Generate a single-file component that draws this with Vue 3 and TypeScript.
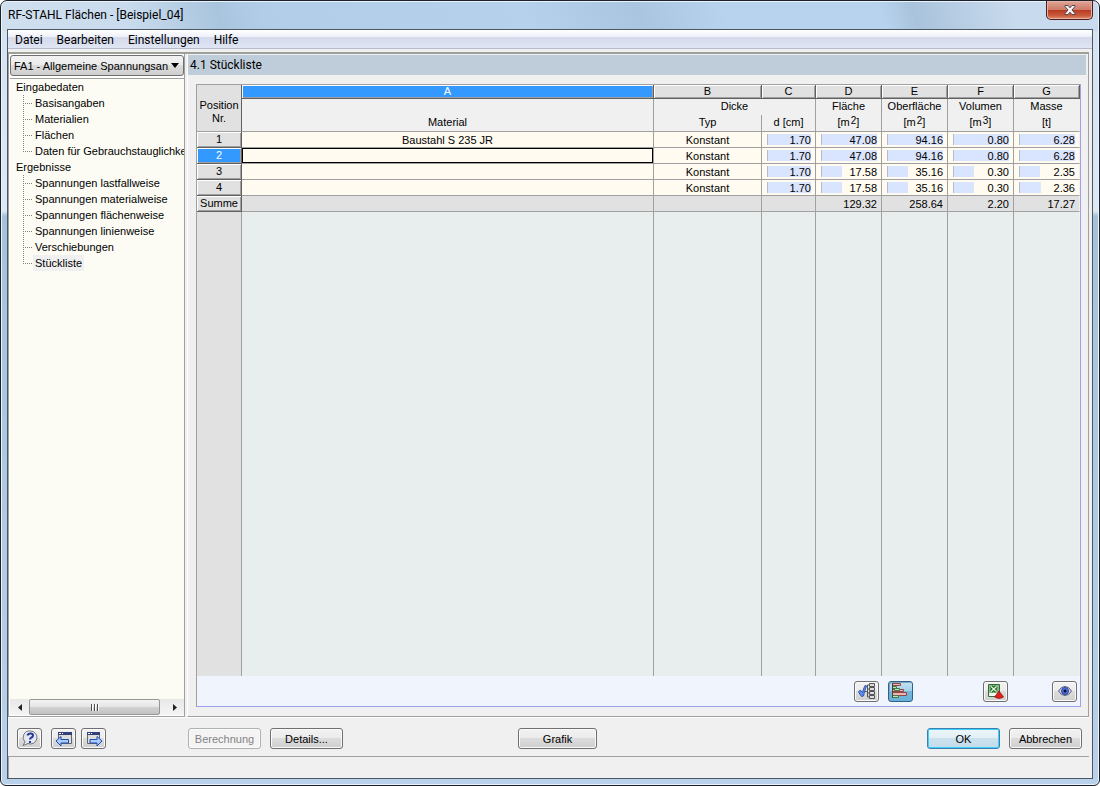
<script setup lang="ts">
import { ref } from 'vue'

interface Row {
  nr: number
  material: string
  typ: string
  values: string[]
}

const menus: string[] = ['Datei', 'Bearbeiten', 'Einstellungen', 'Hilfe']

const tree = [
  {
    title: 'Eingabedaten',
    items: ['Basisangaben', 'Materialien', 'Flächen', 'Daten für Gebrauchstauglichke'],
  },
  {
    title: 'Ergebnisse',
    items: [
      'Spannungen lastfallweise',
      'Spannungen materialweise',
      'Spannungen flächenweise',
      'Spannungen linienweise',
      'Verschiebungen',
      'Stückliste',
    ],
  },
]

const letters: string[] = ['A', 'B', 'C', 'D', 'E', 'F', 'G']

const rows: Row[] = [
  { nr: 1, material: 'Baustahl S 235 JR', typ: 'Konstant', values: ['1.70', '47.08', '94.16', '0.80', '6.28'] },
  { nr: 2, material: '', typ: 'Konstant', values: ['1.70', '47.08', '94.16', '0.80', '6.28'] },
  { nr: 3, material: '', typ: 'Konstant', values: ['1.70', '17.58', '35.16', '0.30', '2.35'] },
  { nr: 4, material: '', typ: 'Konstant', values: ['1.70', '17.58', '35.16', '0.30', '2.36'] },
]

const sums: string[] = ['', '', '', '129.32', '258.64', '2.20', '17.27']

const activeItem = ref('Stückliste')
const activeRow = ref(2)

function share(column: number, value: string): string {
  const max = Math.max(...rows.map((r) => Number(r.values[column])))
  return `${Math.round((Number(value) / max) * 100)}%`
}
</script>

<template>
  <div class="window">
    <header class="titlebar">
      <h1>RF-STAHL Flächen - [Beispiel_04]</h1>
      <button class="close" type="button" aria-label="Schließen">
        <svg width="12" height="10" viewBox="0 0 12 10">
          <path d="M1 .5H4L6 2.8 8 .5H11V1.500L8 5 11 8.500V9.500H8L6 7.200 4 9.500H1V8.500L4 5 1 1.500Z" fill="#f4f4f4" stroke="#4e4650" />
        </svg>
      </button>
    </header>

    <div class="client">
      <nav class="menu">
        <button v-for="m in menus" :key="m" type="button">{{ m }}</button>
      </nav>

      <div class="main">
        <aside class="side">
          <div class="combo">
            <select aria-label="Bemessungsfall">
              <option>FA1 - Allgemeine Spannungsan.</option>
            </select>
            <svg class="arrow" width="8" height="5" viewBox="0 0 8 5"><path d="M0 0H8L4 5Z" fill="#000" /></svg>
          </div>
          <div class="tree">
            <section v-for="group in tree" :key="group.title">
              <h2>{{ group.title }}</h2>
              <ul>
                <li v-for="item in group.items" :key="item">
                  <button type="button" :class="{ current: item === activeItem }" @click="activeItem = item">{{ item }}</button>
                </li>
              </ul>
            </section>
          </div>
          <div class="scroll">
            <button type="button" aria-label="Nach links">
              <svg width="4" height="7" viewBox="0 0 4 7"><path d="M4 0V7L0 3.500Z" fill="#222" /></svg>
            </button>
            <div class="thumb"><i></i><i></i><i></i></div>
            <button type="button" aria-label="Nach rechts">
              <svg width="4" height="7" viewBox="0 0 4 7"><path d="M0 0V7L4 3.500Z" fill="#222" /></svg>
            </button>
          </div>
        </aside>

        <section class="content">
          <h2 class="caption">4.1 Stückliste</h2>
          <div class="sheet">
            <div class="grid">
              <table>
                <colgroup>
                  <col class="w-pos" />
                  <col />
                  <col class="w-typ" />
                  <col class="w-d" />
                  <col class="w-num" />
                  <col class="w-num" />
                  <col class="w-num" />
                  <col class="w-num" />
                </colgroup>
                <thead>
                  <tr class="letters">
                    <th rowspan="3" class="corner">Position<br />Nr.</th>
                    <th v-for="l in letters" :key="l" class="raised" :class="{ picked: l === 'A' }">{{ l }}</th>
                  </tr>
                  <tr class="head">
                    <th rowspan="2" class="low">Material</th>
                    <th colspan="2" class="open">Dicke</th>
                    <th class="open">Fläche</th>
                    <th class="open">Oberfläche</th>
                    <th class="open">Volumen</th>
                    <th class="open">Masse</th>
                  </tr>
                  <tr class="head units">
                    <th>Typ</th>
                    <th>d [cm]</th>
                    <th>[m<sup>2</sup>]</th>
                    <th>[m<sup>2</sup>]</th>
                    <th>[m<sup>3</sup>]</th>
                    <th>[t]</th>
                  </tr>
                </thead>
                <tbody>
                  <tr v-for="r in rows" :key="r.nr" class="data" @click="activeRow = r.nr">
                    <th class="raised" :class="{ picked: r.nr === activeRow }">{{ r.nr }}</th>
                    <td class="text" :class="{ focus: r.nr === activeRow }">{{ r.material }}</td>
                    <td class="text">{{ r.typ }}</td>
                    <td v-for="(v, i) in r.values" :key="i">
                      <div class="bar" :style="{ '--share': share(i, v) }">{{ v }}</div>
                    </td>
                  </tr>
                  <tr class="sum">
                    <th class="raised">Summe</th>
                    <td v-for="(s, i) in sums" :key="i" class="text">{{ s }}</td>
                  </tr>
                  <tr class="rest">
                    <td v-for="n in 8" :key="n"></td>
                  </tr>
                </tbody>
              </table>
            </div>
            <div class="tools">
              <button class="tool" type="button" aria-label="Auswahl">
                <svg width="18" height="16" viewBox="0 0 18 16">
                  <path d="M.5 9Q1 7 3 7.500L4.500 9.500Q5.500 4.500 7.500 2L8.500 3Q6.500 8 5.500 13L3.500 13.500Z" fill="#5f8ff0" stroke="#1c3f9c" stroke-width=".8" />
                  <path d="M7 8.500H9.500M9.500 2V14M9.500 2H12M9.500 6H12M9.500 10H12M9.500 14H12" fill="none" stroke="#555" />
                  <path d="M11.500 .5H16.500V3.500H11.500ZM11.500 4.500H16.500V7.500H11.500ZM11.500 8.500H16.500V11.500H11.500ZM11.500 12.500H16.500V15.500H11.500Z" fill="#ddd" stroke="#555" />
                </svg>
              </button>
              <button class="tool on" type="button" aria-label="Balken">
                <svg width="19" height="16" viewBox="0 0 19 16">
                  <path d="M1.500 .5H9.500V2.500H1.500ZM1.500 6.500H12.500V8.500H1.500ZM1.500 9.500H15.500V12.500H1.500Z" fill="#f6b0b0" stroke="#8a4a4a" />
                  <path d="M1.500 3.500H5.500V5.500H1.500ZM3.500 5.500H8.500V7.500H3.500ZM1.500 12.500H7.500V14.500H1.500Z" fill="#b0ecb4" stroke="#47784e" />
                  <path d="M1.500 0V15" stroke="#444" />
                </svg>
              </button>
              <button class="tool excel" type="button" aria-label="Export nach Excel">
                <svg width="16" height="17" viewBox="0 0 16 17">
                  <path d="M.5 1.500H11.500V13.500H.5Z" fill="#f4f8f2" stroke="#2f6e35" />
                  <path d="M1 2H11V10H1Z" fill="#8fbf88" />
                  <path d="M3 3.500 8.500 8.500M8.500 3.500 3 8.500" stroke="#14601f" stroke-width="3.500" />
                  <path d="M3 3.500 8.500 8.500M8.500 3.500 3 8.500" stroke="#e8f6e6" stroke-width="1.300" />
                  <path d="M11 8 15.500 14Q11.500 17 6.500 14Z" fill="#e02020" stroke="#8c1010" stroke-width=".7" />
                </svg>
              </button>
              <button class="tool eye" type="button" aria-label="Ansicht">
                <svg width="14" height="10" viewBox="0 0 14 10">
                  <path d="M.5 5Q3 .5 7 .5T13.500 5Q11 9.500 7 9.500T.5 5Z" fill="#d4d8ea" stroke="#555c78" />
                  <circle cx="7" cy="5" r="3.500" fill="#4f74e4" stroke="#2c3f94" />
                  <circle cx="7" cy="5" r="1.500" fill="#050a20" />
                </svg>
              </button>
            </div>
          </div>
        </section>
      </div>

      <footer class="actions">
        <button class="tool" type="button" aria-label="Hilfe">
          <svg width="18" height="17" viewBox="0 0 18 17">
            <path d="M9.500 1A6.500 6.500 0 1 1 7 13.500L2 15.500 4 12A6.500 6.500 0 0 1 9.500 1Z" fill="#e4e8f0" stroke="#777" />
            <path d="M6.500 5.500Q7 3.500 9.500 3.500 12 3.500 12 5.500 12 7 10 7.800 9 8.300 9 9.500" fill="none" stroke="#26389c" stroke-width="2" />
            <path d="M8 11H10V13H8Z" fill="#26389c" />
          </svg>
        </button>
        <button class="tool back" type="button" aria-label="Zurück">
          <svg width="18" height="16" viewBox="0 0 18 16">
            <path d="M3.500 1.500H16.500V12.500H3.500Z" fill="#ddd" stroke="#666" />
            <path d="M3 1H17V4H3Z" fill="#34407c" />
            <path d="M4 2H6V3H4ZM7 2H8V3H7Z" fill="#fff" />
            <path d="M1 10 6 5.500V8.500H13.500V12H6V15Z" fill="#a9ccff" stroke="#204bb0" />
          </svg>
        </button>
        <button class="tool next" type="button" aria-label="Weiter">
          <svg width="18" height="16" viewBox="0 0 18 16">
            <path d="M2.500 1.500H14.500V12.500H2.500Z" fill="#ddd" stroke="#666" />
            <path d="M2 1H15V4H2Z" fill="#34407c" />
            <path d="M3 2H5V3H3ZM6 2H7V3H6Z" fill="#fff" />
            <path d="M17 10 12 5.500V8.500H5V12H12V15Z" fill="#a9ccff" stroke="#204bb0" />
          </svg>
        </button>
        <button class="push calc" type="button" disabled>Berechnung</button>
        <button class="push details" type="button">Details...</button>
        <button class="push graphic" type="button">Grafik</button>
        <button class="push ok" type="button">OK</button>
        <button class="push" type="button">Abbrechen</button>
      </footer>
      <div class="status"></div>
    </div>
  </div>
</template>

<style>
html,
body {
  margin: 0;
  background: #fff;
}
</style>

<style scoped>
* {
  box-sizing: border-box;
}
button,
select {
  margin: 0;
  padding: 0;
  font: inherit;
  color: inherit;
}
svg {
  display: block;
}
.window {
  display: flex;
  flex-direction: column;
  min-height: 100vh;
  padding: 0 6px 6px;
  border: 1px solid #1c222b;
  border-radius: 7px 7px 6px 6px;
  background: linear-gradient(75deg, #cfdfee 0, #c9dbed 12%, #a9c5de 20%, #b2cde8 24%, #b6d1ec 48%, #a9c5e0 58%, #b8d3ee 66%, #b8d3ee 80%, #a9c3dc 83%, #c8daed 92%) top / 100% 30px no-repeat,
    linear-gradient(#d3e1f1 0, #dce8f5 210px, #a5c2dc 215px, #b9d1ea 100%);
  box-shadow: inset 0 0 0 1px #eaf3fb;
  font-family: "Liberation Sans", Arial, sans-serif;
  font-size: 11px;
  line-height: 16px;
  color: #000;
}
.titlebar {
  display: flex;
  justify-content: space-between;
  align-items: flex-start;
  height: 28px;
}
.titlebar h1 {
  margin: 5px 0 0 1px;
  font: 12px/18px Roboto, "Open Sans", sans-serif;
}
.close {
  display: grid;
  place-items: center;
  width: 47px;
  height: 19px;
  border: 1px solid #4d1c1c;
  border-top: 0;
  border-radius: 0 0 5px 5px;
  background: linear-gradient(#e0a698 0, #cf7a68 48%, #b83a20 50%, #c85a3c 80%, #dc8f6c 100%);
  box-shadow: inset 0 0 0 1px #e6b3a6;
}
.client {
  flex: 1;
  display: flex;
  flex-direction: column;
  border: 1px solid #4c5763;
  background: #f0f0f0;
}
.menu {
  display: flex;
  gap: 14px;
  height: 19px;
  padding: 0 7px;
  border-bottom: 1px solid #b6bccc;
  background: linear-gradient(#fff 0, #edf0f8 38%, #d5daec 42%, #e0e5f4 100%);
}
.menu button {
  border: 0;
  background: none;
  font: 12px/20px Roboto, "Open Sans", sans-serif;
}
.main {
  flex: 1;
  display: flex;
  gap: 2px;
  margin: 3px 3px 0 0;
  border-top: 2px solid #a0a09a;
  border-bottom: 1px solid #fff;
}
.side {
  display: flex;
  flex-direction: column;
  width: 177px;
  padding: 1px 0 1px 1px;
  border-left: 1px solid #a0a0a0;
  border-right: 1px solid #a0a0a0;
  border-bottom: 1px solid #a0a0a0;
  background: #fff;
}
.combo {
  display: grid;
  align-items: center;
  border-bottom: 1px solid #a0a0a0;
  padding-bottom: 2px;
}
.combo select {
  grid-area: 1 / 1;
  appearance: none;
  width: 174px;
  height: 21px;
  padding: 0 14px 0 3px;
  border: 1px solid #707070;
  border-radius: 3px;
  background: linear-gradient(#f2f2f2 0, #ebebeb 48%, #dcdcdc 50%, #cfcfcf 100%);
}
.arrow {
  grid-area: 1 / 1;
  justify-self: end;
  margin-right: 5px;
  pointer-events: none;
}
.tree {
  flex: 1;
  overflow: hidden;
  background: #fcfcf4;
}
.tree h2 {
  margin: 0;
  padding-left: 6px;
  font: inherit;
}
.tree ul {
  margin: 0;
  padding: 0 0 0 13px;
  list-style: none;
}
.tree li {
  display: flex;
  align-items: center;
  height: 16px;
  white-space: nowrap;
  background: repeating-linear-gradient(90deg, #808080 0 1px, transparent 1px 2px) 0 8px / 9px 1px no-repeat,
    repeating-linear-gradient(#808080 0 1px, transparent 1px 2px) 0 0 / 1px 16px no-repeat;
}
.tree li:last-child {
  background: repeating-linear-gradient(90deg, #808080 0 1px, transparent 1px 2px) 0 8px / 9px 1px no-repeat,
    repeating-linear-gradient(#808080 0 1px, transparent 1px 2px) 0 0 / 1px 8px no-repeat;
}
.tree li button {
  margin-left: 10px;
  padding: 0 2px;
  border: 0;
  background: none;
  line-height: 16px;
}
.tree li button.current {
  background: #f0f0f0;
}
.scroll {
  display: flex;
  height: 16px;
  background: linear-gradient(#e8e8e8, #f4f4f4);
}
.scroll button {
  display: grid;
  place-items: center;
  width: 19px;
  border: 0;
  background: none;
}
.thumb {
  display: flex;
  justify-content: center;
  align-items: center;
  gap: 1px;
  width: 131px;
  border: 1px solid #979797;
  border-radius: 2px;
  background: linear-gradient(#f3f3f3 0, #e6e6e6 48%, #d2d2d2 50%, #c2c2c2 100%);
}
.scroll button:last-child {
  margin-left: 5px;
}
.thumb i {
  width: 2px;
  height: 7px;
  border-left: 1px solid #505050;
  border-right: 1px solid #fff;
}
.content {
  flex: 1;
  display: flex;
  flex-direction: column;
  padding: 1px 2px 0 0;
  border-right: 1px solid #a0a0a0;
  border-bottom: 1px solid #a0a0a0;
  border-left: 1px solid #fff;
}
.caption {
  margin: 0;
  padding-left: 2px;
  background: #bfccd9;
  font: 12px/20px Roboto, "Open Sans", sans-serif;
}
.sheet {
  flex: 1;
  display: flex;
  flex-direction: column;
  margin: 9px 5px 9px 8px;
  border: 1px solid #a0a0a0;
  border-right-color: #a0a0ee;
  border-bottom-color: #a0a0ee;
  background: #f0f4fc;
}
.grid {
  flex: 1;
  display: grid;
}
table {
  width: 100%;
  height: 100%;
  table-layout: fixed;
  border-spacing: 0;
}
.w-pos { width: 45px; }
.w-typ { width: 108px; }
.w-d { width: 54px; }
.w-num { width: 66px; }
th,
td {
  padding: 0;
  border-right: 1px solid #a0a0a0;
  border-bottom: 1px solid #a0a0a0;
  font-weight: 400;
  text-align: center;
  line-height: 15px;
}
tr > :last-child {
  border-right-color: #f0f0f0;
}
.letters { height: 14px; }
.letters .raised {
  line-height: 13px;
  border-color: #606060;
}
.raised {
  background: #e1e1e1;
  box-shadow: inset 1px 1px #fff, inset -1px -1px #a0a0a0;
}
th.picked {
  background: #3399ff;
  color: #fff;
}
tbody .raised {
  border-color: #606060;
}
.corner {
  padding-bottom: 6px;
  background: #e1e1e1;
  vertical-align: bottom;
  line-height: 13px;
  border-right-color: #606060;
}
.head {
  height: 16px;
  background: #f0f0f0;
}
.units { height: 17px; }
.low { vertical-align: bottom; line-height: 18px; }
.head .open {
  border-bottom: 0;
  padding-bottom: 2px;
  line-height: 14px;
}
.units th {
  padding-bottom: 2px;
  line-height: 14px;
}
sup {
  margin-left: 1px;
  font-size: 10px;
  line-height: 0;
  vertical-align: 2px;
}
.data { height: 16px; background: #fffbf0; }
.sum { height: 16px; background: #e1e1e1; }
.text {
  padding-top: 2px;
  line-height: 13px;
}
.focus {
  box-shadow: inset 0 0 0 1px #000;
}
.bar {
  height: 11px;
  margin: 0 4px 0 5px;
  border-left: 1px solid #b4bccc;
  background: linear-gradient(#d9e4fe, #d9e4fe) no-repeat;
  background-size: var(--share) 100%;
  line-height: 12px;
  text-align: right;
}
.sum td {
  padding-right: 4px;
  text-align: right;
}
.rest { background: #e8eeee; }
.rest td { border-bottom: 0; }
.rest td:first-child { background: #e1e1e1; }
.tools {
  display: flex;
  align-items: center;
  height: 30px;
  padding: 0 3px;
}
.tool {
  display: grid;
  place-items: center;
  width: 25px;
  height: 21px;
  border: 1px solid #707070;
  border-radius: 3px;
  background: linear-gradient(#f2f2f2 0, #ebebeb 48%, #dcdcdc 50%, #cfcfcf 100%);
  box-shadow: inset 0 0 0 1px #fafafa;
}
.tools .tool:first-child { margin-left: auto; }
.on {
  margin-left: 9px;
  border-color: #2c628b;
  background: linear-gradient(#c4e2f2 0, #a0d0ea 48%, #74b6dc 50%, #68b0d8 100%);
  box-shadow: inset 1px 1px #7fa8c0;
}
.excel { margin-left: 70px; }
.eye { margin-left: 44px; }
.actions {
  display: flex;
  align-items: center;
  height: 38px;
  padding: 3px 10px 0 9px;
}
.back { margin-left: 9px; }
.next { margin-left: 5px; }
.push {
  width: 73px;
  height: 21px;
  border: 1px solid #707070;
  border-radius: 3px;
  background: linear-gradient(#f2f2f2 0, #ebebeb 48%, #dcdcdc 50%, #cfcfcf 100%);
  box-shadow: inset 0 0 0 1px #fafafa;
}
.calc {
  margin-left: 82px;
  border-color: #adb2b5;
  background: #f4f4f4;
  color: #838383;
}
.details { margin-left: 9px; }
.graphic {
  width: 79px;
  margin: 0 auto 0 175px;
}
.ok {
  margin-right: 9px;
  border-color: #3c7fb1;
  background: linear-gradient(#eef6fa 0, #e0eff6 48%, #cbe2ee 50%, #c4dcea 100%);
  box-shadow: inset 0 0 0 1px #3fd0f8;
}
.status {
  height: 22px;
  margin-right: 3px;
  border-top: 1px solid #a0a0a0;
  border-left: 1px solid #a0a0a0;
}
</style>
